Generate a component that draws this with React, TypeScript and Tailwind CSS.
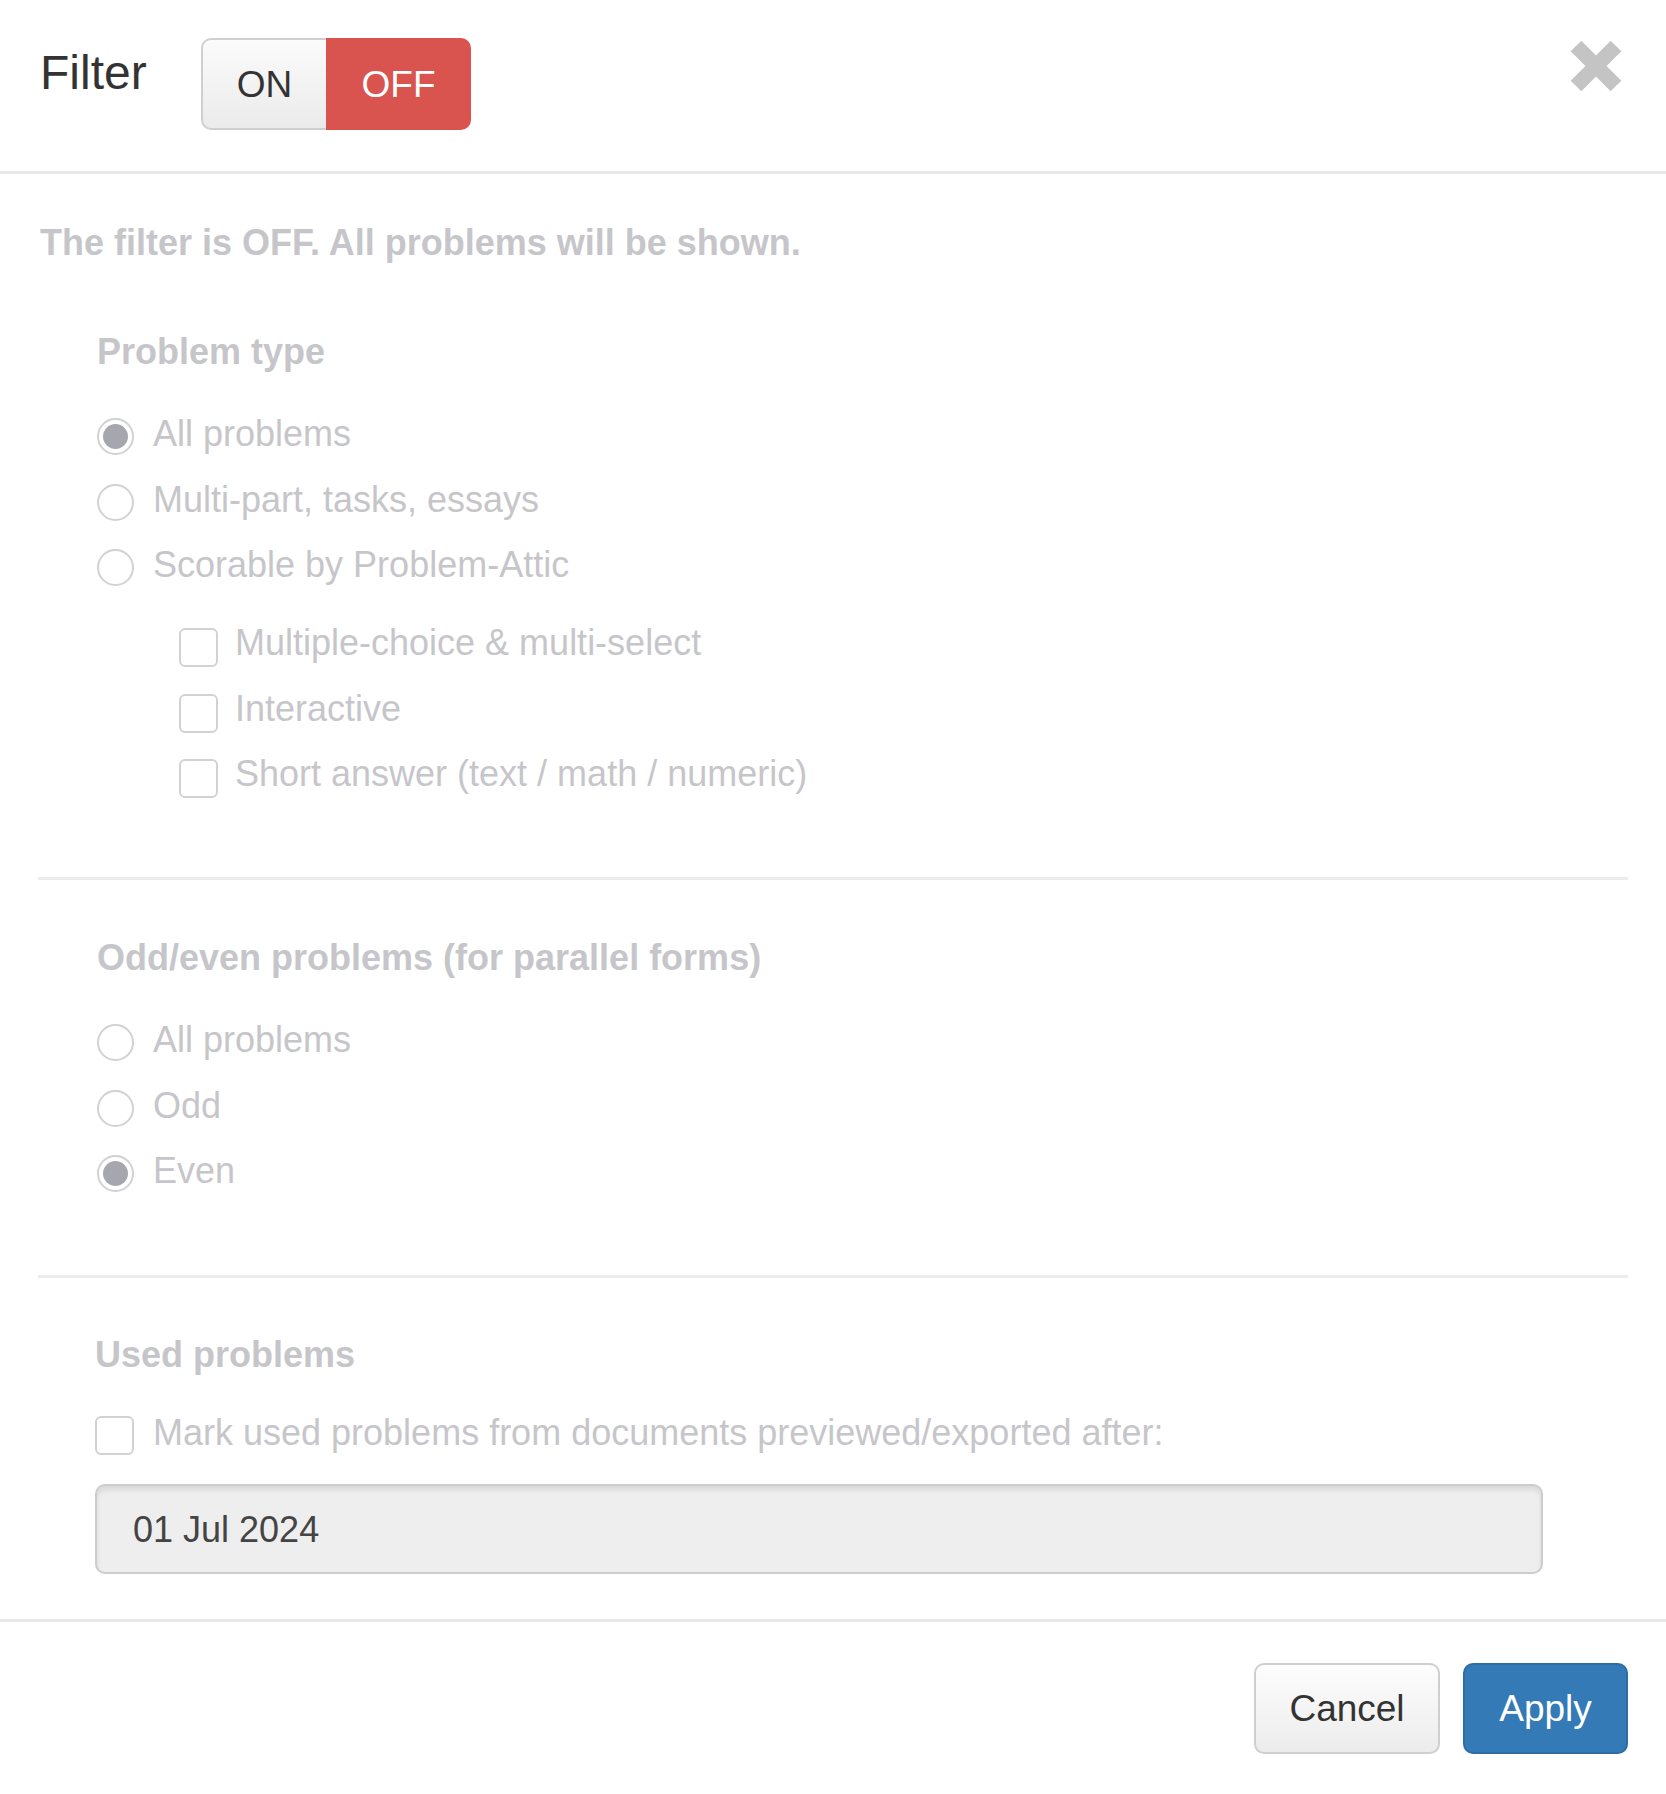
import React from "react";

const muted = "text-[#c6c6ca]";

function Radio({ checked }: { checked?: boolean }) {
  return (
    <span className="mt-[11px] flex h-[37px] w-[37px] shrink-0 items-center justify-center rounded-full border-[2.5px] border-[#d2d2d4] bg-white">
      {checked && <span className="h-[25px] w-[25px] rounded-full bg-[#a6a6af]" />}
    </span>
  );
}

function Box({ top = "mt-[12px]" }: { top?: string }) {
  return (
    <span
      className={`${top} block h-[39px] w-[39px] shrink-0 rounded-[6px] border-[2.5px] border-[#d2d2d4] bg-white`}
    />
  );
}

function RadioRow({ label, checked }: { label: string; checked?: boolean }) {
  return (
    <div className="flex h-[53px] items-start gap-[19px]">
      <Radio checked={checked} />
      <span className={muted}>{label}</span>
    </div>
  );
}

function BoxRow({ label }: { label: string }) {
  return (
    <div className="flex h-[53px] items-start gap-[17px]">
      <Box />
      <span className={muted}>{label}</span>
    </div>
  );
}

export default function App() {
  return (
    <div className="min-h-[1794px] w-full bg-white font-['Liberation_Sans',Arial,sans-serif] text-[36px] leading-[53px] text-[#333]">
      {/* header */}
      <div className="flex h-[174px] items-start border-b-[3px] border-[#e7e7e7] px-[40px]">
        <h1 className="mt-[45px] w-[161px] text-[48px] font-normal leading-[56px] text-[#333]">Filter</h1>
        <div className="mt-[38px] flex h-[92px]">
          <button className="flex w-[125px] items-center justify-center rounded-l-[10px] border-[2.5px] border-r-0 border-[#cfcfcf] bg-gradient-to-b from-[#fbfbfb] to-[#ebebeb] text-[37px] text-[#333]">
            ON
          </button>
          <button className="flex w-[145px] items-center justify-center rounded-r-[10px] bg-[#d9534f] text-[37px] text-white">
            OFF
          </button>
        </div>
        <button className="ml-auto mr-[4px] mt-[40px]">
          <svg width="52" height="52" viewBox="0 0 52 52">
            <path d="M6 6 L46 46 M46 6 L6 46" stroke="#c4c4c4" strokeWidth="15" strokeLinecap="butt" />
          </svg>
        </button>
      </div>

      {/* body */}
      <div className="px-[40px] pb-[45px] pt-[42px]">
        <p className={`font-bold ${muted}`}>The filter is OFF. All problems will be shown.</p>

        <div className="mt-[56px] pl-[57px]">
          <div className={`font-bold ${muted}`}>Problem type</div>
          <div className="mt-[29px] flex flex-col gap-[12.5px]">
            <RadioRow label="All problems" checked />
            <RadioRow label="Multi-part, tasks, essays" />
            <RadioRow label="Scorable by Problem-Attic" />
          </div>
          <div className="mt-[25px] flex flex-col gap-[12.5px] pl-[82px]">
            <BoxRow label="Multiple-choice & multi-select" />
            <BoxRow label="Interactive" />
            <BoxRow label="Short answer (text / math / numeric)" />
          </div>
        </div>

        <hr className="-mx-[2px] mt-[77px] border-t-[3px] border-[#ececec]" />

        <div className="mt-[51px] pl-[57px]">
          <div className={`font-bold ${muted}`}>Odd/even problems (for parallel forms)</div>
          <div className="mt-[29px] flex flex-col gap-[12.5px]">
            <RadioRow label="All problems" />
            <RadioRow label="Odd" />
            <RadioRow label="Even" checked />
          </div>
        </div>

        <hr className="-mx-[2px] mt-[78px] border-t-[3px] border-[#ececec]" />

        <div className="mt-[50px] pl-[55px]">
          <div className={`font-bold ${muted}`}>Used problems</div>
          <div className="mt-[25px] flex h-[53px] items-start gap-[19px]">
            <Box top="mt-[10px]" />
            <span className={muted}>Mark used problems from documents previewed/exported after:</span>
          </div>
          <div className="mt-[25px] flex h-[90px] w-[1448px] items-center rounded-[10px] border-[2.5px] border-[#cccccc] bg-[#eeeeee] px-[36px] text-[#444] shadow-[inset_0_4px_5px_rgba(0,0,0,0.09)]">
            01 Jul 2024
          </div>
        </div>
      </div>

      {/* footer */}
      <div className="flex justify-end gap-[23px] border-t-[3px] border-[#e7e7e7] pr-[38px] pt-[41px]">
        <button className="flex h-[91px] w-[186px] items-center justify-center rounded-[10px] border-[2.5px] border-[#cfcfcf] bg-gradient-to-b from-[#fdfdfd] to-[#ececec] text-[37px] text-[#333]">
          Cancel
        </button>
        <button className="flex h-[91px] w-[165px] items-center justify-center rounded-[10px] border-[2.5px] border-[#2e6da4] bg-[#337ab7] text-[37px] text-white">
          Apply
        </button>
      </div>
    </div>
  );
}
